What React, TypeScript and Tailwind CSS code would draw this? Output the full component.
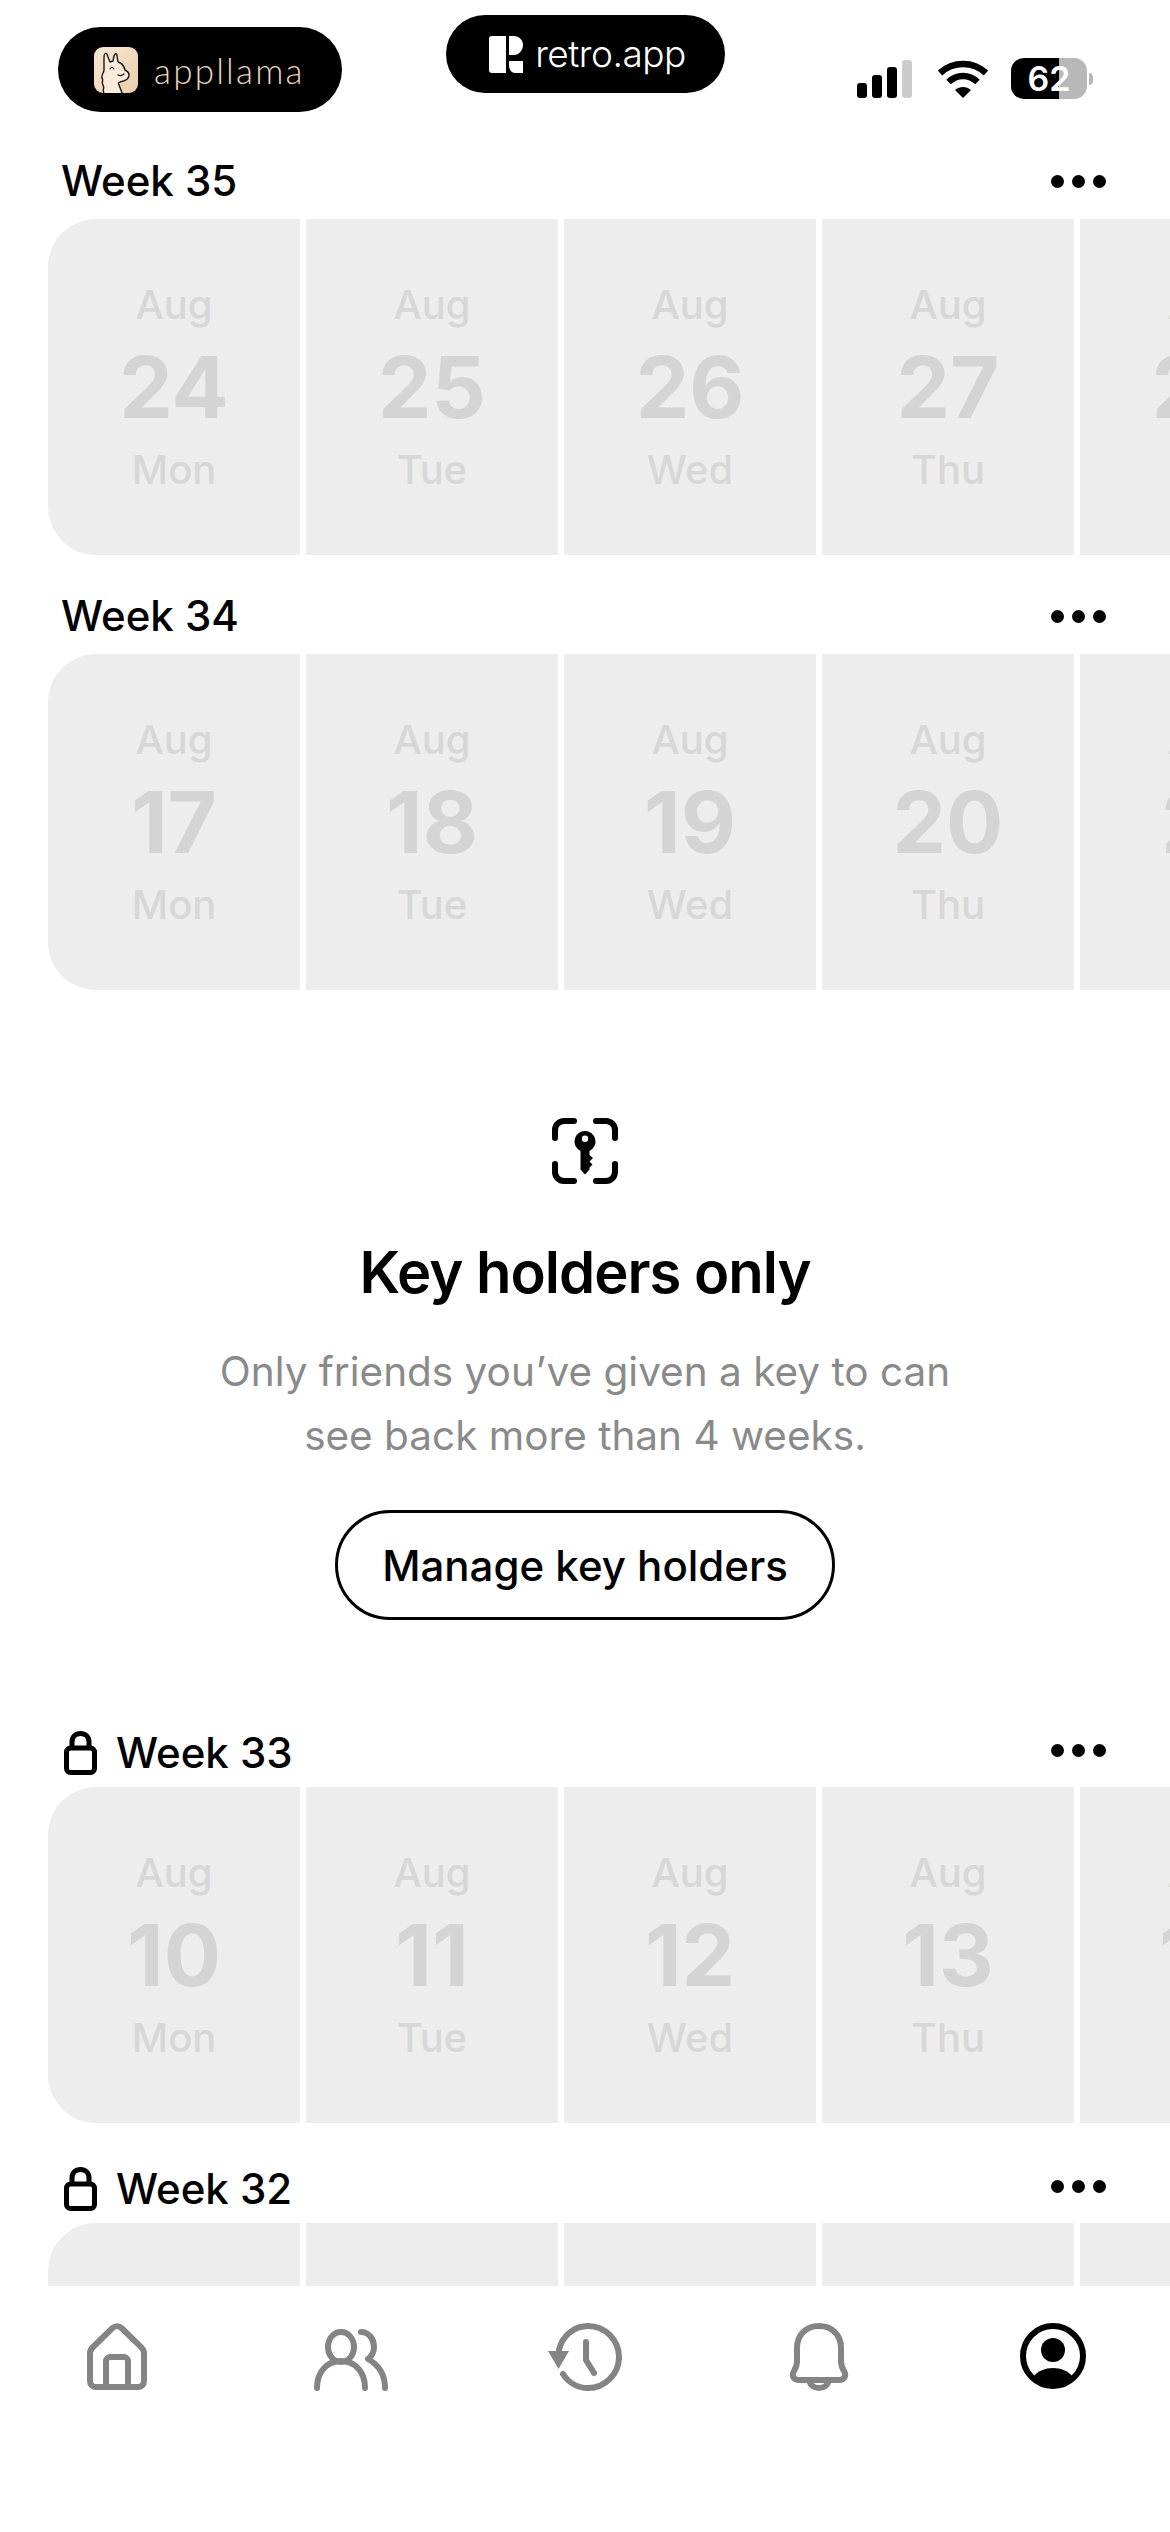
import React from 'react';

type Day = { num: string; day: string };
type Week = { title: string; locked?: boolean; days: Day[]; last: string };

const names = ['Mon', 'Tue', 'Wed', 'Thu'];
const mk = (title: string, nums: string[], last: string, locked?: boolean): Week => ({
  title,
  locked,
  last,
  days: nums.map((num, i) => ({ num, day: names[i] })),
});

const DayCard = ({ d, first }: { d: Day; first?: boolean }) => (
  <div
    className={`w-[252px] h-[336px] shrink-0 bg-[#ededed] flex flex-col items-center ${
      first ? 'rounded-l-[48px]' : ''
    }`}
  >
    <div className="mt-[62px] text-[40px] leading-[48px] font-medium text-[#d7d7d7]">Aug</div>
    <div className="mt-[9px] text-[85px] leading-[100px] font-bold text-[#d4d4d4]">{d.num}</div>
    <div className="mt-[8px] text-[40px] leading-[48px] font-medium text-[#d7d7d7]">{d.day}</div>
  </div>
);

const Dots = ({ raised }: { raised?: boolean }) => (
  <div className={`flex gap-[8px] mr-[64px] ${raised ? 'mb-[6px]' : ''}`}>
    <div className="w-[13px] h-[13px] rounded-full bg-black" />
    <div className="w-[13px] h-[13px] rounded-full bg-black" />
    <div className="w-[13px] h-[13px] rounded-full bg-black" />
  </div>
);

const Lock = () => (
  <svg className="ml-[3px]" width="33" height="44" viewBox="0 0 33 44" fill="none" stroke="#000" strokeWidth="5">
    <rect x="2.500" y="17" width="28" height="24.500" rx="4" />
    <path d="M8 17V11C8 6 11.500 2.500 16.500 2.500S25 6 25 11v6" />
  </svg>
);

const WeekRow = ({ w }: { w: Week }) => (
  <div>
    <div className={`flex items-center justify-between pl-[61px] ${w.locked ? 'h-[68px]' : 'h-[76px]'}`}>
      <div className="flex items-center gap-[19px] text-[42px] leading-[50px] font-medium text-black">
        {w.locked && <Lock />}
        <span>{w.title}</span>
      </div>
      <Dots raised={w.locked} />
    </div>
    <div className="flex gap-[6px] pl-[48px] overflow-hidden">
      {w.days.map((d, i) => (
        <DayCard key={d.num} d={d} first={i === 0} />
      ))}
      <DayCard d={{ num: w.last, day: 'Fri' }} />
    </div>
  </div>
);

const Llama = () => (
  <svg width="44" height="46" viewBox="0 0 44 46">
    <defs>
      <linearGradient id="lg" x1="0" y1="0" x2="1" y2="1">
        <stop offset="0" stopColor="#f7e6d2" />
        <stop offset="1" stopColor="#eccfae" />
      </linearGradient>
    </defs>
    <rect width="44" height="46" rx="9" fill="url(#lg)" />
    <path
      d="M10 46c-2-3 1-5-1-8-2-3 1-4-1-7-1-3 2-5 2-8L10 11c0-6 3-6 4-1l2 5 3-1 1-5c1-3 3-3 3 0l1 6c4 1 6 4 7 8 2 1 4 2 4 5 0 4-4 6-9 7-1 0-2 1-1 3l5 13"
      fill="#f9ecdc"
      stroke="#1c1712"
      strokeWidth="1.4"
      strokeLinejoin="round"
    />
    <path d="M16 22c1-2 3-2 4 0M24 28c2 1 4 1 6-1" fill="none" stroke="#1c1712" strokeWidth="1.2" strokeLinecap="round" />
  </svg>
);

const RetroLogo = () => (
  <svg width="34" height="37" viewBox="0 0 34 37" fill="#fff">
    <path d="M3 0h14v37H3a3 3 0 0 1-3-3V3a3 3 0 0 1 3-3z" />
    <path d="M20 0h5c5 0 9 4 9 9s-4 10-9 10h-5z" />
    <path d="M20 25h14v12h-8c-4 0-6-4-6-8z" />
  </svg>
);

const Signal = () => (
  <div className="flex items-end gap-[5px] h-[38px]">
    <div className="w-[10px] h-[15px] rounded-[3px] bg-black" />
    <div className="w-[10px] h-[23px] rounded-[3px] bg-black" />
    <div className="w-[10px] h-[31px] rounded-[3px] bg-black" />
    <div className="w-[10px] h-[38px] rounded-[3px] bg-[#cccccc]" />
  </div>
);

const Wifi = () => (
  <svg width="52" height="38" viewBox="0 0 52 38" fill="none" stroke="#000" strokeWidth="6.5">
    <path d="M3 13C16 1 36 1 49 13" />
    <path d="M11.500 22C20 14 32 14 40.500 22" />
    <path d="M26 38l-8-8c4.500-4 11.500-4 16 0z" fill="#000" stroke="none" />
  </svg>
);

const Battery = () => (
  <div className="flex items-center gap-[2px]">
    <div className="relative w-[76px] h-[41px] rounded-[13px] overflow-hidden bg-[#b8b8b8] flex items-center justify-center">
      <div className="absolute left-0 top-0 bottom-0 w-[48px] bg-black" />
      <span className="relative text-[34px] leading-[40px] font-semibold text-white">62</span>
    </div>
    <div className="w-[4px] h-[12px] rounded-r-full bg-[#b8b8b8]" />
  </div>
);

const KeyIcon = () => (
  <svg width="66" height="66" viewBox="0 0 66 66" fill="none" stroke="#000" strokeWidth="6" strokeLinecap="round">
    <path d="M3 20V12a9 9 0 0 1 9-9h10M44 3h10a9 9 0 0 1 9 9v8M3 46v8a9 9 0 0 0 9 9h10M44 63h10a9 9 0 0 0 9-9v-8" />
    <path
      fillRule="evenodd"
      stroke="none"
      fill="#000"
      d="M33 13a10.500 10.500 0 0 1 4.500 20v4l3.500 3-3.500 3.500 3 3-3 3v2l-4.500 5-4.500-5V33A10.500 10.500 0 0 1 33 13zm0 4.500a3.200 3.200 0 1 0 0 6.400 3.200 3.200 0 0 0 0-6.400z"
    />
  </svg>
);

const Home = () => (
  <svg width="60" height="67" viewBox="0 0 60 67" fill="none" stroke="#848484" strokeWidth="6" strokeLinejoin="round">
    <path d="M25.500 5L6 24c-2 2-3 4-3 6v28c0 4 3 6 6 6h42c3 0 6-2 6-6V30c0-2-1-4-3-6L34.500 5c-2.500-2.500-6.500-2.500-9 0z" />
    <path d="M19 64V38c0-2 2-4 4-4h14c2 0 4 2 4 4v26" />
  </svg>
);

const Friends = () => (
  <svg className="mt-[6px]" width="74" height="62" viewBox="0 0 74 62" fill="none" stroke="#848484" strokeWidth="6" strokeLinecap="round">
    <ellipse cx="27" cy="18" rx="13" ry="15" />
    <path d="M3 59c0-16 10-27 24-27s24 11 24 27" />
    <path d="M47 3c8 0 13 7 13 15 0 5-2 9-6 12 9 5 17 14 17 29" strokeLinejoin="round" />
  </svg>
);

const History = () => (
  <svg width="74" height="68" viewBox="0 0 74 68" fill="none" stroke="#848484" strokeWidth="6" strokeLinecap="round">
    <path d="M11 27C14 13 26 3 40 3c17 0 31 14 31 31S57 65 40 65c-11 0-20-6-25-14" />
    <path d="M0 28h21L10.500 46z" fill="#848484" stroke="none" />
    <path d="M38 19v18l8 13" strokeLinejoin="round" />
  </svg>
);

const Bell = () => (
  <svg width="60" height="68" viewBox="0 0 60 68" fill="none" stroke="#848484" strokeWidth="6" strokeLinejoin="round">
    <path d="M30 3C17 3 8 12 8 25v13c0 4-1 7-3 10-3 5 0 9 5 9h40c5 0 8-4 5-9-2-3-3-6-3-10V25C52 12 43 3 30 3z" />
    <path d="M20 57c1 5 5 8 10 8s9-3 10-8" />
  </svg>
);

const Profile = () => (
  <svg width="66" height="66" viewBox="0 0 66 66">
    <circle cx="33" cy="33" r="30" fill="none" stroke="#000" strokeWidth="6" />
    <circle cx="33" cy="27" r="12" fill="#000" />
    <path d="M14 53c4-5 11-8 19-8s15 3 19 8c-5 6-12 10-19 10s-14-4-19-10z" fill="#000" />
  </svg>
);

const top: Week[] = [
  mk('Week 35', ['24', '25', '26', '27'], '28'),
  mk('Week 34', ['17', '18', '19', '20'], '21'),
];
const bottom: Week[] = [
  mk('Week 33', ['10', '11', '12', '13'], '14', true),
  mk('Week 32', ['3', '4', '5', '6'], '7', true),
];

export default function App() {
  return (
    <div
      className="relative w-[1170px] h-[2532px] overflow-hidden bg-white flex flex-col"
      style={{ fontFamily: 'Inter, sans-serif' }}
    >
      {/* screen recording pill */}
      <div className="absolute left-[446px] top-[15px] w-[279px] h-[78px] rounded-full bg-black flex items-center justify-center gap-[12px] pl-[4px] text-white">
        <RetroLogo />
        <span className="text-[37px] leading-[46px] font-light tracking-[-0.5px]">retro.app</span>
      </div>

      {/* top bar */}
      <div className="h-[143px] shrink-0 flex items-start pl-[58px] pr-[77px]">
        <div className="mt-[27px] w-[284px] h-[85px] rounded-full bg-black flex items-center pl-[36px] gap-[16px]">
          <Llama />
          <span
            className="text-[35px] leading-[44px] font-light text-[#e8d5bf] tracking-[2.2px]"
            style={{ fontFamily: 'Lato, sans-serif' }}
          >
            appllama
          </span>
        </div>
        <div className="ml-auto mt-[58px] flex items-center">
          <Signal />
          <div className="ml-[25px] mr-[22px]">
            <Wifi />
          </div>
          <Battery />
        </div>
      </div>

      <div className="flex-1 overflow-hidden">
        <div className="flex flex-col gap-[23px]">
          {top.map((w) => (
            <WeekRow key={w.title} w={w} />
          ))}
        </div>

        <div className="h-[729px] flex flex-col items-center pt-[128px]">
          <KeyIcon />
          <div className="mt-[53px] text-[58px] leading-[70px] font-semibold tracking-[-1px] text-black">
            Key holders only
          </div>
          <div className="mt-[33px] text-center text-[40.5px] leading-[64px] text-[#8a8a8a]">
            <div>Only friends you’ve given a key to can</div>
            <div>see back more than 4 weeks.</div>
          </div>
          <div className="mt-[42px] w-[500px] h-[110px] rounded-full border-[3px] border-black flex items-center justify-center text-[42px] font-medium text-black">
            Manage key holders
          </div>
        </div>

        <div className="flex flex-col gap-[32px]">
          {bottom.map((w) => (
            <WeekRow key={w.title} w={w} />
          ))}
        </div>
      </div>

      {/* tab bar */}
      <div className="h-[246px] shrink-0 bg-white grid grid-cols-5 pt-[37px] items-start justify-items-center">
        <Home />
        <Friends />
        <History />
        <Bell />
        <Profile />
      </div>
    </div>
  );
}
